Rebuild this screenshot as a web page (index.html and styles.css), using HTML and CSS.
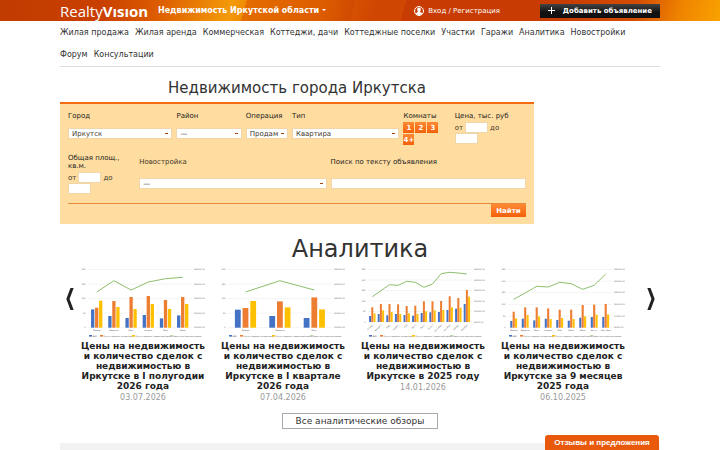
FILE: index.html
```html
<!DOCTYPE html>
<html lang="ru">
<head>
<meta charset="utf-8">
<title>RealtyVision</title>
<link rel="stylesheet" href="styles.css">
</head>
<body>
<header class="top">
  <div class="wrap top-row">
    <a class="logo" href="#">Realty<b>Vısıon</b></a>
    <button class="region" type="button">Недвижимость Иркутской области<svg class="caret" viewBox="0 0 4 2"><path d="M0 0h4L2 2z"/></svg></button>
    <a class="login" href="#"><svg class="user" viewBox="0 0 20 20"><circle cx="10" cy="10" r="9"/><path d="M10 3c-3 0-4 2-3.500 5 .3 1.500 1 2.500 1.500 3-.3 2-4 2-4 5 3 3 9 3 12 0 0-3-3.700-3-4-5 .5-.5 1.200-1.500 1.500-3C14 5 13 3 10 3z"/></svg>Вход / Регистрация</a>
    <a class="add" href="#"><svg class="plus" viewBox="0 0 7 7"><path d="M3 0h1v3h3v1H4v3H3V4H0V3h3z"/></svg>Добавить объявление</a>
  </div>
</header>
<main class="wrap">
  <nav class="menu">
    <a href="#">Жилая продажа</a><a href="#">Жилая аренда</a><a href="#">Коммерческая</a><a href="#">Коттеджи, дачи</a><a href="#">Коттеджные поселки</a><a href="#">Участки</a><a href="#">Гаражи</a><a href="#">Аналитика</a><a href="#">Новостройки</a><a href="#">Форум</a><a href="#">Консультации</a>
  </nav>
  <section class="finder">
    <h1>Недвижимость города Иркутска</h1>
    <form class="search">
      <div class="line line-main">
        <div class="field"><label for="city">Город</label><select id="city"><option>Иркутск</option></select></div>
        <div class="field"><label for="district">Район</label><select id="district"><option>—</option></select></div>
        <div class="field"><label for="deal">Операция</label><select id="deal"><option>Продам</option></select></div>
        <div class="field"><label for="kind">Тип</label><select id="kind"><option>Квартира</option></select></div>
        <div class="field tight"><span class="caption">Комнаты</span><div class="rooms"><button type="button">1</button><button type="button">2</button><button type="button">3</button><button type="button">4+</button></div></div>
        <div class="field tight"><span class="caption">Цена, тыс. руб</span><div class="range"><label for="pf">от</label><input id="pf"><label for="pt">до</label><input id="pt"></div></div>
      </div>
      <div class="line line-extra">
        <div class="field area"><span class="caption">Общая площ., кв.м.</span><div class="range"><label for="af">от</label><input id="af"><label for="at">до</label><input id="at"></div></div>
        <div class="field"><label for="building">Новостройка</label><select id="building"><option>—</option></select></div>
        <div class="field"><label class="dark" for="query">Поиск по тексту объявления</label><input id="query"></div>
      </div>
      <div class="submit"><button type="submit">Найти</button></div>
    </form>
  </section>
  <section class="analytics">
    <h2>Аналитика</h2>
    <div class="carousel">
      <button class="arrow" type="button" aria-label="Назад"><svg viewBox="0 0 8 24"><path d="M4.500 0H8L3.500 12 8 24H4.500L0 12z"/></svg></button>
      <div class="cards">
        <article><svg class="chart" viewBox="0 0 140 74"></svg><h3><a href="#">Цены на недвижимость и количество сделок с недвижимостью в Иркутске в I полугодии 2026 года</a></h3><time>03.07.2026</time></article>
        <article><svg class="chart" viewBox="0 0 140 74"></svg><h3><a href="#">Цены на недвижимость и количество сделок с недвижимостью в Иркутске в I квартале 2026 года</a></h3><time>07.04.2026</time></article>
        <article><svg class="chart" viewBox="0 0 140 74"></svg><h3><a href="#">Цены на недвижимость и количество сделок с недвижимостью в Иркутске в 2025 году</a></h3><time>14.01.2026</time></article>
        <article><svg class="chart" viewBox="0 0 140 74"></svg><h3><a href="#">Цены на недвижимость и количество сделок с недвижимостью в Иркутске за 9 месяцев 2025 года</a></h3><time>06.10.2025</time></article>
      </div>
      <button class="arrow" type="button" aria-label="Вперёд"><svg viewBox="0 0 8 24"><path d="M3.500 0H0L4.500 12 0 24H3.500L8 12z"/></svg></button>
    </div>
    <a class="all" href="#">Все аналитические обзоры</a>
  </section>
  <div class="panel"></div>
</main>
<button class="feedback" type="button">Отзывы и предложения</button>
<script src="charts.js"></script>
</body>
</html>
```
FILE: styles.css
```css
* { box-sizing: border-box; }
html { overflow: hidden; }
body {
  margin: 0;
  background: #fff;
  color: #333;
  font: 8px/10px "DejaVu Sans", sans-serif;
}
a { color: inherit; text-decoration: none; }
button, input, select { font: inherit; color: inherit; margin: 0; border: 0; border-radius: 0; padding: 0; }
.wrap { width: calc(100% - 120px); margin: 0 auto; }

.top {
  color: #fff;
  background:
    linear-gradient(105deg, transparent 0 49%, rgba(225, 95, 0, .3) 49% 56%, transparent 56%),
    linear-gradient(105deg, #c13c02 0%, #c93f00 14%, #dd5c00 22%, #f39a0a 32%, #f08c05 34%, #e46c00 34%, #dc5c00 45%, #c83c03 52%, #c83c03 78%, #d44c03 88%, #ef8200 94%, #f9a300 100%);
}
.top-row { display: flex; align-items: center; height: 21px; }
.logo { font: 15px/20px "Open Sans", sans-serif; width: 98px; white-space: nowrap; }
.region { background: none; font-weight: bold; white-space: nowrap; }
.caret { width: 4px; height: 2px; margin-left: 3px; vertical-align: middle; fill: #fff; }
.login { display: flex; align-items: center; gap: 4px; margin-left: auto; font-size: 7px; }
.user { width: 10px; height: 10px; fill: #fff; }
.user circle { fill: none; stroke: #fff; stroke-width: 2; }
.add {
  display: flex; align-items: center; justify-content: space-between;
  width: 120px; height: 14px; margin-left: 40px; padding: 0 8px;
  background: linear-gradient(#444, #111 60%);
  font-size: 7px; font-weight: bold;
}
.plus { width: 7px; height: 7px; fill: #fff; }

.menu { display: flex; flex-wrap: wrap; column-gap: 6px; padding: 1px 24px 0 0; border-bottom: 1px solid #ddd; }
.menu a { line-height: 22px; }

.finder { width: 79%; }
h1 { margin: 11px 0 4px; font: 15px/20px "DejaVu Sans", sans-serif; text-align: center; }
.search { border-top: 2px solid #f26a11; background: #ffdda0; padding: 8px 8px 7px; font-size: 7px; color: #43382a; }
.line { display: grid; column-gap: 4px; }
.line-main { grid-template-columns: 104fr 65fr 42fr 107fr 47fr 71fr; height: 42px; }
.line-extra { grid-template-columns: 67fr 187fr 195fr; height: 49px; }
.field { display: flex; flex-direction: column; align-items: stretch; min-width: 0; }
.field > label, .caption { line-height: 8px; margin-bottom: 8px; color: #222; }
.tight .caption, .area .caption { margin-bottom: 2px; }
.line-extra .field > label { margin: 4px 0 12px; color: #43382a; }
.line-extra .field > .dark { color: #222; }
select {
  appearance: none; width: 100%; height: 11px; padding: 0 3px; border: 1px solid #f0d6a8;
  background: linear-gradient(#a54a10, #a54a10) no-repeat right 3px center / 3px 1px #fff;
}
input { height: 11px; border: 1px solid #f0d6a8; background: #fff; width: 100%; }
.rooms { display: grid; grid-template-columns: repeat(3, 11px); gap: 1px; }
.rooms button, .submit button { background: linear-gradient(#ff8a35, #f26008); color: #fff; font-weight: bold; }
.rooms button { height: 11px; }
.range { display: flex; flex-wrap: wrap; align-items: center; column-gap: 2px; padding-right: 8px; }
.range input { width: 23px; }
.submit { border-top: 1px solid #e9893a; text-align: right; }
.submit button { width: 35px; height: 13px; vertical-align: top; }

.analytics { text-align: center; }
h2 { margin: 9px 0 0; font: 24px/32px "DejaVu Sans", sans-serif; }
.carousel { display: flex; align-items: flex-start; justify-content: space-between; padding: 0 6px; }
.arrow { width: 7px; height: 22px; margin-top: 23px; background: none; }
.arrow svg { display: block; width: 8px; height: 22px; fill: #222; }
.cards { flex: 1; display: grid; grid-template-columns: repeat(4, 1fr); margin: 0 14px 0 0; }
.chart { display: block; width: 100%; }
.chart text { font-size: 2px; fill: #555; }
article { height: 148px; }
h3 { margin: 2px 4px 0; font: bold 9px/10px "DejaVu Sans", sans-serif; color: #222; }
time { display: block; margin-top: 2px; line-height: 10px; color: #999; }
.all { display: inline-block; border: 1px solid #aaa; padding: 2px 13px; font-size: 9px; }
.panel { height: 20px; margin-top: 14px; background: #f2f2f2; }
.feedback {
  position: fixed; right: 61px; bottom: 0; width: 114px; height: 15px;
  border-radius: 3px 3px 0 0; background: #e9590c; color: #fff;
  font: bold 8px/15px "Liberation Sans", sans-serif;
}
```
FILE: charts.js
```js
const colors = ["#4472c4", "#ed7d31", "#ffc000"];
const names = ["Январь", "Февраль", "Март", "Апрель", "Май", "Июнь", "Июль", "Август", "Сентябрь", "Октябрь", "Ноябрь", "Декабрь"];
const charts = [
  { start: 23.7, step: 17.2, bar: 3.3, pitch: 4, base: 62.7, rows: 4,
    bars: [[18.3, 20, 27], [11.7, 26.7, 20.7], [9.7, 30.7, 18.7], [12.7, 31.7, 23.7], [9.3, 27.7, 18.7], [12.3, 30.7, 23.7]],
    line: [27, 15.7, 25, 17, 13.7, 12.3] },
  { start: 32.5, step: 34.4, bar: 5.8, pitch: 7.7, base: 62.7, rows: 4,
    bars: [[18, 19.7, 26.7], [11.7, 26.3, 20.3], [9.7, 30.3, 18.3]],
    line: [27, 15.7, 25] },
  { start: 19.3, step: 8.6, bar: 2, pitch: 2.2, base: 57, rows: 5, tilt: true,
    bars: [[6, 14.7, 8.7], [8, 18, 11.7], [6.7, 18, 10], [8, 17.7, 8], [7, 16, 8.7], [6.3, 16.3, 8], [9, 20.7, 10.7], [9.7, 20.7, 11.7], [10, 21, 12], [12, 25.7, 14.7], [13.3, 24, 14.3], [18, 32, 25.3]],
    line: [31.7, 25.7, 19.7, 20.3, 16.3, 17.3, 22.3, 19, 8.7, 7.3, 8, 9] },
  { start: 20.7, step: 11.5, bar: 2.1, pitch: 2.4, base: 62.7, rows: 5,
    bars: [[6.7, 16, 9.3], [9, 20.3, 12.7], [7.3, 20.3, 11.3], [9, 19.3, 8.7], [7.7, 18, 9.7], [7, 18, 8.7], [10, 22.7, 11.3], [10.7, 23, 13], [10.7, 23.7, 13.3]],
    line: [34.3, 28, 21.3, 22, 17.3, 18.7, 24.3, 20.3, 9] }
];

document.querySelectorAll(".chart").forEach((svg, index) => {
  const c = charts[index];
  let out = "";
  for (let i = 0; i <= c.rows; i++) {
    const y = 4.5 + (c.base - 4.5) * i / c.rows;
    out += `<path d="M15 ${y}H119" stroke="#e4e4e4" stroke-width=".4"/>`;
    out += `<text x="12.5" y="${y + .7}" text-anchor="end">${(c.rows - i) * 50}</text>`;
    out += `<text x="121" y="${y + .7}">${180 - i * 20}000,00</text>`;
  }
  c.bars.forEach((group, m) => {
    const x = c.start + c.step * m;
    group.forEach((h, k) => {
      out += `<rect x="${x + (k - 1) * c.pitch - c.bar / 2}" y="${c.base - h}" width="${c.bar}" height="${h}" fill="${colors[k]}"/>`;
    });
    out += c.tilt
      ? `<text text-anchor="end" transform="translate(${x + 1} ${c.base + 3}) rotate(-45)">${names[m]}</text>`
      : `<text x="${x}" y="${c.base + 3.7}" text-anchor="middle">${names[m]}</text>`;
  });
  out += `<polyline points="${c.line.map((y, m) => `${c.start + c.step * m},${y}`).join(" ")}" fill="none" stroke="#70ad47" stroke-width=".8"/>`;
  [[16, "ДДУ"], [27, "Купля-продажа (вторичный)"], [59, "Купля-продажа (первичный рынок)"], [97, "Цена на вторичном рынке"]].forEach(([x, label], k) => {
    out += `<rect x="${x}" y="${k < 3 ? 70 : 70.5}" width="3" height="${k < 3 ? 1.6 : .6}" fill="${colors[k] || "#70ad47"}"/><text x="${x + 3.5}" y="71.5">${label}</text>`;
  });
  svg.innerHTML = out;
});
```
